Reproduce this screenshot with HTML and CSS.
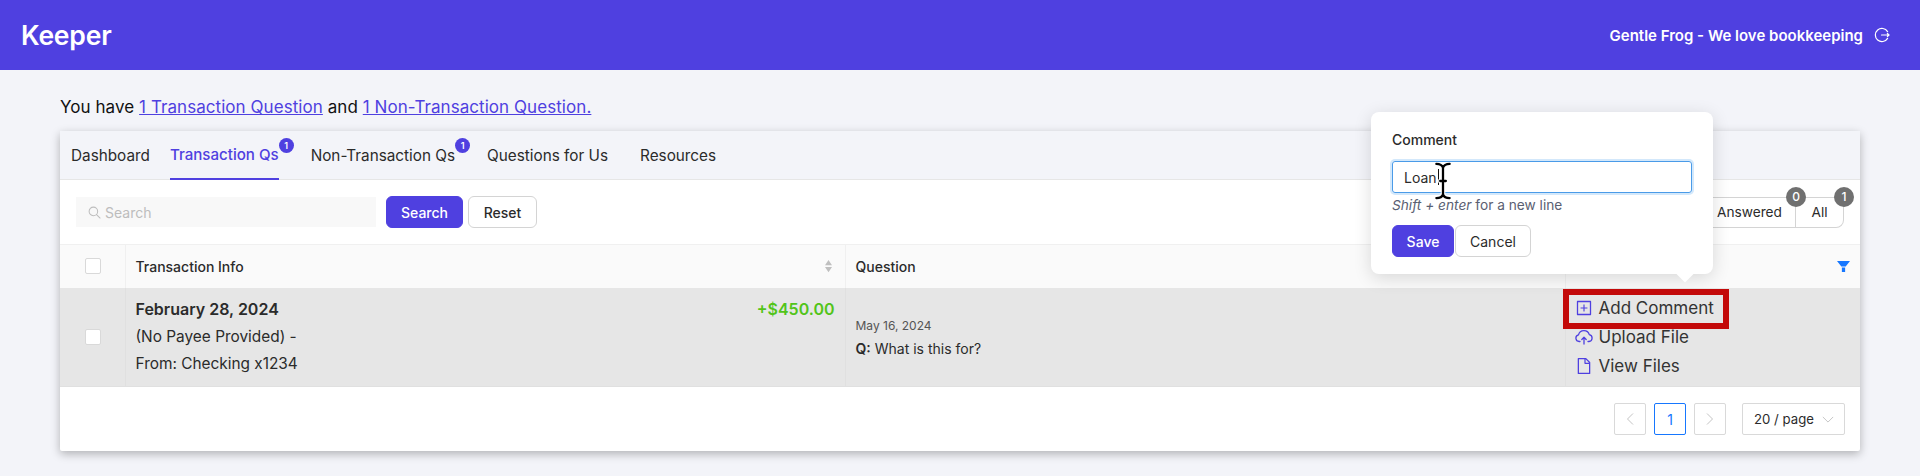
FILE: index.html
```html
<!DOCTYPE html>
<html lang="en">
<head>
    <meta charset="UTF-8">
    <meta name="viewport" content="width=device-width, initial-scale=1.0">
    <title>Keeper</title>
    <link rel="stylesheet" href="styles.css">
</head>
<body>
    <header class="topbar">
        <div class="logo">Keeper</div>
        <div class="account">
            <span>Gentle Frog - We love bookkeeping</span>
            <svg class="logout" viewBox="0 0 16 16" fill="none" stroke="#fff" stroke-width="1.2" stroke-linecap="round">
                <path d="M13.6 4.6A6.6 6.6 0 1 0 13.6 11.4"/>
                <path d="M7.5 8H15M13.4 6.5 15 8l-1.6 1.500"/>
            </svg>
        </div>
    </header>

    <main class="content">
        <p class="intro">You have <a href="#">1 Transaction Question</a> and <a href="#">1 Non-Transaction Question.</a></p>

        <section class="card">
            <nav class="tabs">
                <a class="tab" href="#">Dashboard</a>
                <a class="tab active" href="#">Transaction Qs<span class="tab-badge">1</span></a>
                <a class="tab" href="#">Non-Transaction Qs<span class="tab-badge">1</span></a>
                <a class="tab" href="#">Questions for Us</a>
                <a class="tab" href="#">Resources</a>
            </nav>

            <div class="toolbar">
                <div class="search">
                    <svg class="search-icon" viewBox="0 0 14 14" fill="none" stroke="#bdbdbd" stroke-width="1.1" stroke-linecap="round">
                        <circle cx="5.800" cy="5.800" r="4.600"/>
                        <path d="M9.200 9.200 13 13"/>
                    </svg>
                    <span>Search</span>
                </div>
                <button class="btn btn-primary btn-search">Search</button>
                <button class="btn btn-reset">Reset</button>
                <div class="filter-group">
                    <span class="filter-item filter-answered">Answered<span class="count">0</span></span>
                    <span class="filter-item filter-all">All<span class="count">1</span></span>
                </div>
            </div>

            <table class="questions">
                <colgroup>
                    <col class="col-check">
                    <col class="col-info">
                    <col class="col-question">
                    <col>
                </colgroup>
                <thead>
                    <tr>
                        <th class="cell-check"><span class="checkbox"></span></th>
                        <th>
                            <div class="th-row">
                                Transaction Info
                                <svg class="sorter" viewBox="0 0 10 16" fill="#bfbfbf"><path d="M5 1 9 7H1zM5 15 1 9h8z"/></svg>
                            </div>
                        </th>
                        <th>Question</th>
                        <th>
                            <div class="th-row th-end">
                                <svg class="funnel" viewBox="0 0 12 12" fill="#1677ff"><path d="M0 1h12L8 6H4zM4.500 7h3v4h-3z"/></svg>
                            </div>
                        </th>
                    </tr>
                </thead>
                <tbody>
                    <tr>
                        <td class="cell-check"><span class="checkbox"></span></td>
                        <td>
                            <div class="tx-top">
                                <strong>February 28, 2024</strong>
                                <span class="amount">+$450.00</span>
                            </div>
                            <div class="tx-line">(No Payee Provided) -</div>
                            <div class="tx-line">From: Checking x1234</div>
                        </td>
                        <td>
                            <div class="q-date">May 16, 2024</div>
                            <div class="q-text"><b>Q:</b> What is this for?</div>
                        </td>
                        <td class="cell-actions">
                            <div class="action">
                                <svg class="action-icon" viewBox="64 64 896 896" fill="#4f40e0"><path d="M328 544h152v152c0 4.400 3.600 8 8 8h48c4.400 0 8-3.600 8-8V544h152c4.400 0 8-3.600 8-8v-48c0-4.400-3.600-8-8-8H544V328c0-4.400-3.600-8-8-8h-48c-4.400 0-8 3.600-8 8v152H328c-4.400 0-8 3.600-8 8v48c0 4.400 3.600 8 8 8z"/><path d="M880 112H144c-17.700 0-32 14.300-32 32v736c0 17.700 14.300 32 32 32h736c17.700 0 32-14.300 32-32V144c0-17.700-14.300-32-32-32zm-40 728H184V184h656v656z"/></svg>
                                Add Comment
                            </div>
                            <div class="action">
                                <svg class="action-icon icon-wide" viewBox="0 0 18 18" fill="none" stroke="#4f40e0" stroke-width="1.300" stroke-linecap="round" stroke-linejoin="round"><path d="M5 13.500H4.200A3.400 3.400 0 0 1 3.500 6.800 5.600 5.600 0 0 1 14.300 6.600 3.500 3.500 0 0 1 14 13.500H13"/><path d="M9 16V9.500M6.800 11.500 9 9.300l2.200 2.200"/></svg>
                                Upload File
                            </div>
                            <div class="action">
                                <svg class="action-icon" viewBox="64 64 896 896" fill="#4f40e0"><path d="M854.600 288.600L639.400 73.400c-6-6-14.100-9.400-22.600-9.400H192c-17.700 0-32 14.300-32 32v832c0 17.700 14.300 32 32 32h640c17.700 0 32-14.300 32-32V311.300c0-8.500-3.400-16.700-9.400-22.700zM790.200 326H602V137.800L790.200 326zm1.800 562H232V136h302v216a42 42 0 0 0 42 42h216v494z"/></svg>
                                View Files
                            </div>
                        </td>
                    </tr>
                </tbody>
            </table>

            <div class="pager">
                <span class="page-btn">
                    <svg viewBox="0 0 10 14" fill="none" stroke="#c4c4c4" stroke-width="1"><path d="M8 1.500 2.500 7 8 12.500"/></svg>
                </span>
                <span class="page-btn page-current">1</span>
                <span class="page-btn">
                    <svg viewBox="0 0 10 14" fill="none" stroke="#c4c4c4" stroke-width="1"><path d="M2 1.500 7.500 7 2 12.500"/></svg>
                </span>
                <span class="page-size">
                    20 / page
                    <svg viewBox="0 0 14 8" fill="none" stroke="#bdbdbd" stroke-width="1"><path d="M1 1l6 6 6-6"/></svg>
                </span>
            </div>

            <div class="popover">
                <div class="pop-title">Comment</div>
                <div class="pop-input">Loan<span class="caret"></span></div>
                <div class="pop-hint"><em>Shift + enter</em> for a new line</div>
                <div class="pop-buttons">
                    <button class="btn btn-primary btn-save">Save</button>
                    <button class="btn btn-cancel">Cancel</button>
                </div>
            </div>

            <svg class="ibeam" viewBox="0 0 20 40" fill="none" stroke-linecap="round">
                <g stroke="#fff" stroke-width="5" opacity="0.85">
                    <path d="M3 2c4 0 6 1 7 4 1-3 3-4 7-4M10 6v28M3 38c4 0 6-1 7-4 1 3 3 4 7 4M7 20h6"/>
                </g>
                <g stroke="#000" stroke-width="2.400">
                    <path d="M3 2c4 0 6 1 7 4 1-3 3-4 7-4M10 6v28M3 38c4 0 6-1 7-4 1 3 3 4 7 4M7 20h6"/>
                </g>
            </svg>

            <div class="highlight"></div>
        </section>
    </main>
</body>
</html>
```

FILE: styles.css
```css
* {
    box-sizing: border-box;
}

body {
    margin: 0;
    background-color: #f3f4f9;
    font-family: Inter, "Liberation Sans", sans-serif;
    color: #2b2b2b;
}

.topbar {
    display: flex;
    justify-content: space-between;
    align-items: center;
    height: 70px;
    padding: 0 30px 0 21px;
    background-color: #4f40e0;
    color: #fff;
}

.logo {
    font-size: 26.5px;
    font-weight: 600;
    letter-spacing: -0.2px;
}

.account {
    display: flex;
    align-items: center;
    gap: 11px;
    font-size: 15px;
    font-weight: 600;
}

.logout {
    width: 16px;
    height: 16px;
}

.content {
    padding: 26px 60px 25px;
}

.intro {
    margin: 0 0 13px;
    font-size: 17px;
    line-height: 22px;
    letter-spacing: 0.06px;
    color: #111;
}

.intro a {
    color: #4f40e0;
}

.card {
    position: relative;
    background-color: #fff;
    box-shadow: 0 3px 10px rgba(0, 0, 0, 0.28);
    border-radius: 2px;
}

.tabs {
    display: flex;
    gap: 20px;
    height: 49px;
    padding-left: 11px;
    background-color: #f3f4f9;
    border-bottom: 1px solid #e6e6e6;
}

.tab {
    position: relative;
    display: flex;
    align-items: center;
    height: 49px;
    margin-right: 12px;
    font-size: 15.3px;
    color: #2b2b2b;
    text-decoration: none;
}

.tab:first-child {
    margin-right: 0;
}

.tab.active {
    color: #4f40e0;
    font-size: 15.1px;
    font-weight: 500;
    border-bottom: 2px solid #4f40e0;
}

.tab-badge {
    position: absolute;
    top: 7px;
    right: -15px;
    width: 15px;
    height: 15px;
    border-radius: 50%;
    background-color: #4f40e0;
    color: #fff;
    font-size: 9px;
    font-weight: 600;
    line-height: 15px;
    text-align: center;
}

.toolbar {
    display: flex;
    align-items: center;
    height: 64px;
    padding: 0 16px 0 16px;
}

.search {
    display: flex;
    align-items: center;
    gap: 4px;
    width: 300px;
    height: 30px;
    padding-left: 12px;
    background-color: #f8f8f8;
    color: #bdbdbd;
    font-size: 14px;
}

.search-icon {
    width: 13px;
    height: 13px;
}

.btn {
    height: 32px;
    padding: 0;
    border: 1px solid #d4d4d4;
    border-radius: 6px;
    background-color: #fff;
    color: #2b2b2b;
    font-family: inherit;
    font-size: 14px;
    font-weight: 500;
}

.btn-primary {
    border-color: #4f40e0;
    background-color: #4f40e0;
    color: #fff;
}

.btn-search {
    width: 77px;
    margin-left: 10px;
}

.btn-reset {
    width: 69px;
    margin-left: 5px;
}

.filter-group {
    display: flex;
    margin-left: auto;
    height: 31px;
    border: 1px solid #d4d4d4;
    border-left: none;
    border-radius: 0 8px 8px 0;
}

.filter-item {
    position: relative;
    display: flex;
    align-items: center;
    justify-content: center;
    font-size: 13.7px;
}

.filter-answered {
    width: 85px;
    padding-right: 7px;
    border-right: 1px solid #d4d4d4;
}

.filter-all {
    width: 47px;
}

.count {
    position: absolute;
    top: -11px;
    right: -11px;
    width: 20px;
    height: 20px;
    border-radius: 50%;
    background-color: #707070;
    color: #fff;
    font-size: 12px;
    font-weight: 500;
    line-height: 20px;
    text-align: center;
}

.questions {
    width: 100%;
    table-layout: fixed;
    border-collapse: collapse;
}

.col-check {
    width: 65px;
}

.col-info,
.col-question {
    width: 720px;
}

.questions th {
    height: 43px;
    padding: 0 10px;
    background-color: #fafafa;
    border: 1px solid #f0f0f0;
    border-width: 1px 1px 0 0;
    font-size: 14px;
    font-weight: 500;
    text-align: left;
}

.questions th:last-child {
    border-right: none;
    padding-right: 10px;
}

.questions td {
    height: 99px;
    padding: 0 10px 0 10px;
    background-color: #e6e6e6;
    border-right: 1px solid #e0e0e0;
    border-bottom: 1px solid #e0e0e0;
    font-size: 14px;
}

.questions td:last-child {
    border-right: none;
}

.questions td.cell-check,
.questions th.cell-check {
    padding: 0 0 0 25px;
}

.checkbox {
    display: block;
    width: 16px;
    height: 16px;
    border: 1px solid #d9d9d9;
    border-radius: 2px;
    background-color: #fff;
}

.th-row {
    display: flex;
    justify-content: space-between;
    align-items: center;
}

.th-end {
    justify-content: flex-end;
}

.sorter {
    width: 9px;
    height: 14px;
    margin-right: 2px;
}

.funnel {
    width: 13px;
    height: 13px;
}

.tx-top {
    display: flex;
    justify-content: space-between;
    font-size: 16px;
    line-height: 27px;
}

.tx-top strong {
    font-weight: 600;
}

.amount {
    color: #52c41a;
    font-weight: 600;
}

.tx-line {
    font-size: 15.4px;
    line-height: 27px;
}

.q-date {
    padding-top: 4px;
    font-size: 12px;
    line-height: 18px;
    color: #555;
}

.q-text {
    margin-top: 3px;
    font-size: 14px;
    line-height: 22px;
}

.q-text b {
    font-weight: 600;
}

.cell-actions .action {
    display: flex;
    align-items: center;
    gap: 7px;
    height: 29px;
    font-size: 17px;
    color: #333;
}

.action-icon {
    width: 16px;
    height: 18px;
}

.icon-wide {
    width: 18px;
    margin: 0 -1px;
}

.pager {
    display: flex;
    justify-content: flex-end;
    align-items: center;
    gap: 8px;
    height: 64px;
    padding-right: 15px;
}

.page-btn {
    display: flex;
    align-items: center;
    justify-content: center;
    width: 32px;
    height: 32px;
    border: 1px solid #d9d9d9;
    border-radius: 2px;
    font-size: 14px;
}

.page-btn svg {
    width: 10px;
    height: 14px;
}

.page-current {
    border-color: #1677ff;
    color: #1677ff;
}

.page-size {
    display: flex;
    align-items: center;
    justify-content: space-between;
    width: 103px;
    height: 32px;
    margin-left: 8px;
    padding: 0 10px 0 11px;
    border: 1px solid #d9d9d9;
    border-radius: 2px;
    font-size: 13.2px;
}

.page-size svg {
    width: 12px;
    height: 7px;
}

.popover {
    position: absolute;
    top: -19px;
    left: 1311px;
    width: 342px;
    height: 162px;
    padding: 19px 21px;
    background-color: #fff;
    border-radius: 8px;
    box-shadow: 0 4px 18px rgba(0, 0, 0, 0.14);
}

.popover::after {
    content: "";
    position: absolute;
    left: 308px;
    bottom: -6px;
    width: 12px;
    height: 12px;
    background-color: #fff;
    transform: rotate(45deg);
}

.pop-title {
    font-size: 14px;
    font-weight: 500;
    line-height: 18px;
}

.pop-input {
    display: flex;
    align-items: center;
    width: 300px;
    height: 32px;
    margin-top: 12px;
    padding-left: 11px;
    border: 1.5px solid #4a9be8;
    border-radius: 3px;
    box-shadow: 0 0 0 2px #d3e8fb;
    font-size: 14px;
}

.caret {
    width: 1px;
    height: 16px;
    margin-left: 1px;
    background-color: #111;
}

.pop-hint {
    margin-top: 3px;
    font-size: 13.7px;
    line-height: 18px;
    color: #5a6072;
}

.pop-buttons {
    display: flex;
    gap: 1px;
    margin-top: 11px;
}

.btn-save {
    width: 62px;
}

.btn-cancel {
    width: 76px;
    font-weight: 400;
}

.ibeam {
    position: absolute;
    top: 31px;
    left: 1373px;
    width: 20px;
    height: 38px;
}

.highlight {
    position: absolute;
    top: 158px;
    left: 1503px;
    width: 166px;
    height: 40px;
    border: 6px solid #c30a0a;
}
```
